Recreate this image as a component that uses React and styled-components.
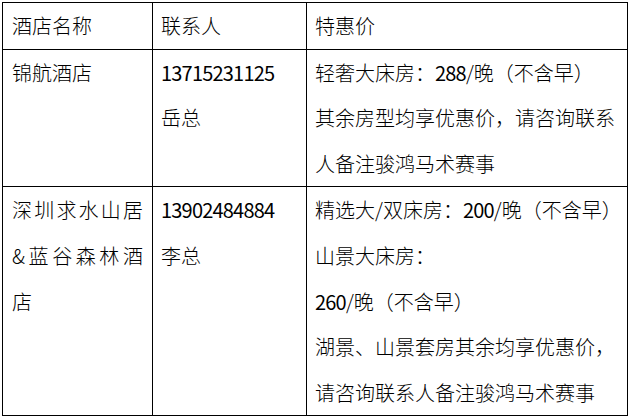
import React from "react";
import styled, { createGlobalStyle } from "styled-components";

const GlobalStyle = createGlobalStyle`
  html, body {
    margin: 0;
    padding: 0;
    background: #fff;
  }
  body {
    font-family: "Noto Sans CJK SC", "Noto Sans", sans-serif;
    color: #000;
  }
`;

const hotels = [
  {
    name: "锦航酒店",
    contact: ["13715231125", "岳总"],
    price: [
      "轻奢大床房：288/晚（不含早）",
      "其余房型均享优惠价，请咨询联系",
      "人备注骏鸿马术赛事",
    ],
  },
  {
    name: "深圳求水山居&蓝谷森林酒店",
    contact: ["13902484884", "李总"],
    price: [
      "精选大/双床房：200/晚（不含早）",
      "山景大床房：",
      "260/晚（不含早）",
      "湖景、山景套房其余均享优惠价，",
      "请咨询联系人备注骏鸿马术赛事",
    ],
  },
];

// digits in the reference are narrower than the CJK font's latin
const splitDigits = (text) =>
  text.split(/(\d+)/).map((part, i) =>
    /^\d+$/.test(part) ? <Num key={i}>{part}</Num> : part
  );

const App = () => {
  return (
    <Page>
      <GlobalStyle />
      <Table>
        <colgroup>
          <col style={{ width: 150 }} />
          <col style={{ width: 154 }} />
          <col style={{ width: 321 }} />
        </colgroup>
        <thead>
          <tr>
            <HeadCell $first>酒店名称</HeadCell>
            <HeadCell>联系人</HeadCell>
            <HeadCell>特惠价</HeadCell>
          </tr>
        </thead>
        <tbody>
          {hotels.map((hotel, index) => (
            <tr key={index}>
              <Cell $first>
                <Name>{splitDigits(hotel.name)}</Name>
              </Cell>
              <Cell>
                {hotel.contact.map((line, i) => (
                  <Line key={i}>{splitDigits(line)}</Line>
                ))}
              </Cell>
              <Cell>
                {hotel.price.map((line, i) => (
                  <Line key={i}>{splitDigits(line)}</Line>
                ))}
              </Cell>
            </tr>
          ))}
        </tbody>
      </Table>
    </Page>
  );
};

const Page = styled.div`
  padding: 2px 0 0 2px;
`;

const Table = styled.table`
  width: 625px;
  table-layout: fixed;
  border-collapse: collapse;
  font-size: 20px;
  font-weight: 300;
  line-height: 45.6px;
`;

const HeadCell = styled.th`
  border: 1px solid #000;
  padding: 0 ${({ $first }) => ($first ? "9px" : "8px")};
  font-weight: 300;
  text-align: left;
  vertical-align: top;
`;

const Cell = styled.td`
  border: 1px solid #000;
  padding: 0 ${({ $first }) => ($first ? "9px" : "8px")};
  vertical-align: top;
`;

const Name = styled.div`
  text-align: justify;
  text-justify: inter-character;
`;

const Line = styled.div`
  white-space: nowrap;
`;

const Num = styled.span`
  font-weight: 400;
  letter-spacing: -0.8px;
`;

export default App;
